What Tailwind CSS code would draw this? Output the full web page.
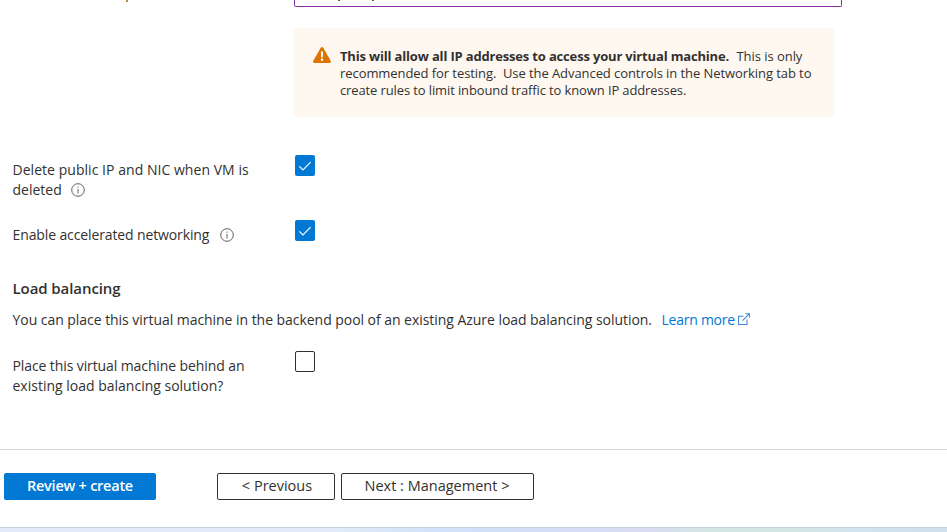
<!DOCTYPE html>
<html lang="en"><head><meta charset="utf-8"><title>Create a virtual machine</title><script src="https://cdn.jsdelivr.net/npm/@tailwindcss/browser@4"></script></head>
<body class="h-[532px] overflow-hidden bg-white font-['Open_Sans','Noto_Sans',sans-serif] text-[14px] leading-5 text-[#323130]">
<div class="flex h-[532px] flex-col whitespace-nowrap">
  <main class="h-[449px] shrink-0">
    <div class="flex h-7">
      <div class="w-[294px] shrink-0"><div class="ml-[126px] h-[2px] w-[2px] bg-[#b08a50]"></div></div>
      <div class="h-[7px] w-[548px] rounded-b-[2px] border border-t-0 border-[#8a2da5]"><div class="ml-[43px] flex gap-[32px]"><div class="h-px w-[2px] bg-[#605550]"></div><div class="h-px w-[2px] bg-[#605550]"></div></div></div>
    </div>
    <div class="ml-[294px] flex h-[89px] w-[540px] rounded-[2px] bg-[#fff8f0] pl-[19px] pt-5 text-[13px] leading-[17px]">
      <svg class="-mt-[2px] mr-[9px] h-[18px] w-[18px] shrink-0" viewBox="0 0 18 18"><path d="M7.7 1.8Q9 .1 10.3 1.8L17.8 15Q18.3 17 16.5 17H1.5Q-.3 17 .2 15Z" fill="#db7500"/><path d="M7.9 5.5h2.2l-.3 6H8.2z" fill="#fff"/><circle cx="9" cy="13.7" r="1.2" fill="#fff"/></svg>
      <div>
        <div class="flex"><b class="w-[396.5px] tracking-[-0.17px]">This will allow all IP addresses to access your virtual machine.</b><span class="tracking-[-0.05px]">This is only</span></div>
        <div class="tracking-[-0.07px]">recommended for testing.&nbsp; Use the Advanced controls in the Networking tab to</div>
        <div class="tracking-[-0.12px]">create rules to limit inbound traffic to known IP addresses.</div>
      </div>
    </div>
    <div class="flex h-[113px] pl-[12.5px] pt-[38px]">
      <div class="w-[282.5px] pt-[5px]"><div class="tracking-[0.04px]">Delete public IP and NIC when VM is</div>
        <div class="flex items-center">deleted<svg class="ml-[9px] h-[14px] w-[14px]" viewBox="0 0 14 14" fill="none" stroke="#605e5c"><circle cx="7" cy="7" r="6.3"/><path d="M7 6v4.5M7 3.6v1.2"/></svg></div></div>
      <div class="flex h-[21px] w-5 items-center justify-center rounded-[2px] bg-[#0078d4]"><svg class="h-[14px] w-[14px]" viewBox="0 0 14 14" fill="none" stroke="#fff" stroke-width="1.15"><path d="M1.3 7.3 5 11 12.6 3.2"/></svg></div>
    </div>
    <div class="-mt-[10px] flex h-[58px] pl-[12.5px]">
      <div class="flex w-[282.5px] items-center self-start pt-[5px]"><span class="tracking-[-0.12px]">Enable accelerated networking</span><svg class="ml-[10.5px] h-[14px] w-[14px]" viewBox="0 0 14 14" fill="none" stroke="#605e5c"><circle cx="7" cy="7" r="6.3"/><path d="M7 6v4.5M7 3.6v1.2"/></svg></div>
      <div class="flex h-[21px] w-5 items-center justify-center rounded-[2px] bg-[#0078d4]"><svg class="h-[14px] w-[14px]" viewBox="0 0 14 14" fill="none" stroke="#fff" stroke-width="1.15"><path d="M1.3 7.3 5 11 12.6 3.2"/></svg></div>
    </div>
    <h2 class="pl-[12.5px] text-[15px] font-semibold tracking-[-0.08px]">Load balancing</h2>
    <div class="mt-3 flex items-center pl-[12.5px]"><span class="w-[649px] tracking-[-0.045px]">You can place this virtual machine in the backend pool of an existing Azure load balancing solution.</span><a class="flex items-center tracking-[-0.25px] text-[#0078d4]">Learn more<svg class="-mt-[2px] ml-[3px] h-[12px] w-[12px]" viewBox="0 0 13 13" fill="none" stroke="#3884dc" stroke-width="1.1"><path d="M6 3.5H.6v8.9h9.2V7M5 8.3 12.1 1M8 .7h4.4V5"/></svg></a></div>
    <div class="mt-[22px] flex pl-[12.5px]">
      <div class="w-[282.5px] pt-[4px]"><div class="tracking-[-0.1px]">Place this virtual machine behind an</div><div>existing load balancing solution?</div></div>
      <div class="-mt-px h-[21px] w-5 rounded-[2px] border border-[#323130] bg-white"></div>
    </div>
  </main>
  <footer class="flex h-[78px] shrink-0 border-t border-[#d9d8d7] pl-1 pt-[23px] text-[14.5px]">
    <button class="mr-[61px] h-[27px] w-[152px] rounded-[2px] bg-[#0078d4] pb-[2px] font-semibold tracking-[-0.25px] text-white">Review + create</button>
    <button class="mr-[6px] h-[27px] w-[118px] rounded-[2px] border border-[#323130] pb-[2px] pl-[2px]">&lt; Previous</button>
    <button class="h-[27px] w-[193px] rounded-[2px] border border-[#323130] pb-[2px] pr-px">Next : Management &gt;</button>
  </footer>
  <div class="h-[5px] border-t border-[#c6d2dc] bg-[linear-gradient(90deg,#e0ebf7_0%,#e0ebf7_36%,#d2e1fa_46%,#d8dcf4_68%,#d5e6e2_75%,#d5e6e2_82%,#d2e4ee_90%,#cfe0ea_100%)]"></div>
</div>
</body></html>
